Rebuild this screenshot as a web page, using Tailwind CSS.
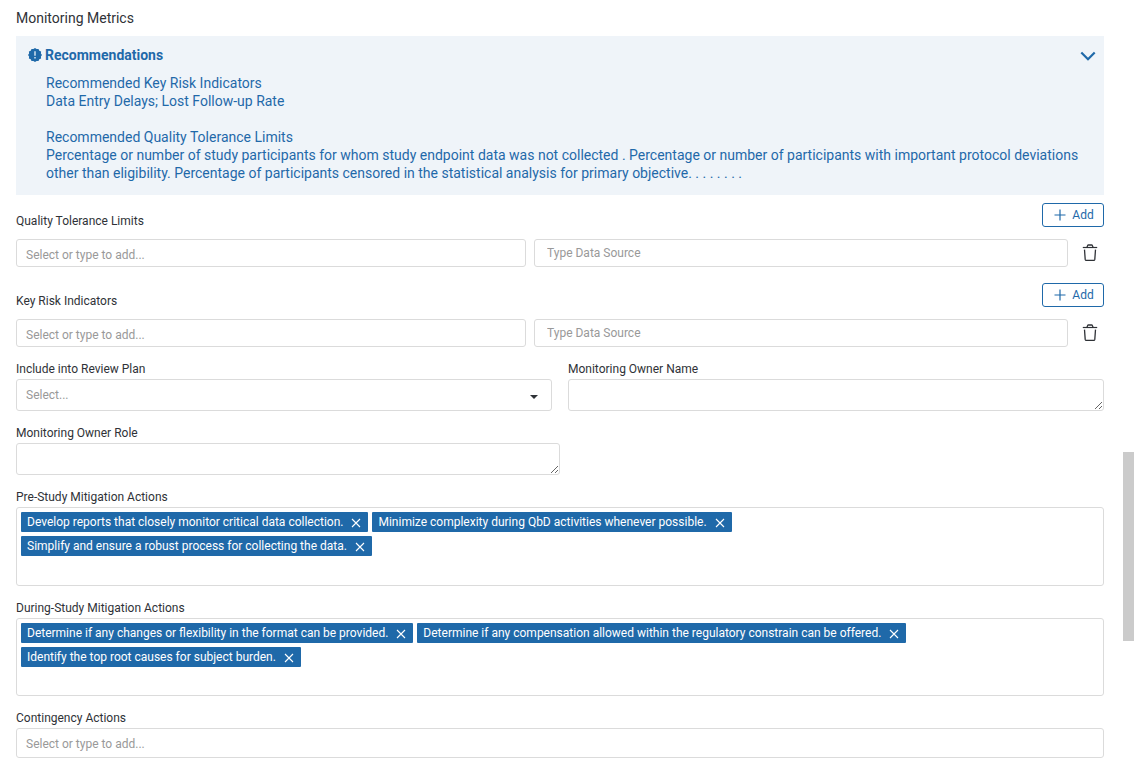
<!DOCTYPE html>
<html lang="en">
<head>
<meta charset="utf-8">
<meta name="viewport" content="width=device-width, initial-scale=1">
<title>Monitoring Metrics</title>
<script src="https://cdn.jsdelivr.net/npm/@tailwindcss/browser@4"></script>
</head>
<body class="relative min-h-screen overflow-hidden bg-white font-['Roboto',sans-serif] text-xs text-[#2f3237]">
<svg class="hidden">
  <symbol id="plus" viewBox="0 0 12 12"><path d="M6 .5v11M.5 6h11" fill="none" stroke="currentColor" stroke-width="1.2"/></symbol>
  <symbol id="cross" viewBox="0 0 10 10"><path d="M1 1l8 8M9 1l-8 8" fill="none" stroke="currentColor" stroke-width="1.1"/></symbol>
  <symbol id="trash" viewBox="0 0 16 18"><path d="M.8 3.500h14.400" fill="none" stroke="currentColor" stroke-width="1.2"/><path d="M5 3.300L5.600 1.600Q5.800 1 6.400 1H9.600Q10.200 1 10.400 1.600L11 3.300M2.500 5.600L3.200 15.400Q3.300 16.400 4.300 16.400H11.700Q12.700 16.400 12.800 15.400L13.500 5.600" fill="none" stroke="currentColor" stroke-width="1.3"/></symbol>
</svg>
<main class="pl-4 pr-[33px] pt-2 pb-1">
  <h1 class="h-7 text-sm leading-5">Monitoring Metrics</h1>

  <section class="bg-[#eff4f9] pt-2 pb-[13px] text-[#1f69a9]">
    <div class="flex h-[30px] items-start justify-between pl-3 pr-2">
      <h2 class="flex items-center gap-[3px] text-sm leading-[22px] font-bold">
        <svg class="size-3.5" viewBox="0 0 14 14" aria-hidden="true"><path fill="currentColor" d="M7 0l1.600 1.100L10.500.9l.8 1.800 1.800.800-.200 1.900L14 7l-1.100 1.600.2 1.900-1.800.800-.800 1.800-1.900-.200L7 14l-1.600-1.100-1.900.2-.800-1.800-1.800-.800.2-1.900L0 7l1.100-1.600L.9 3.500l1.800-.800L3.500.9l1.900.2z"/><path d="M7 3.300v4.400M7 9v1.600" stroke="#dce9f4" stroke-width="1.400"/></svg>
        Recommendations
      </h2>
      <button type="button" aria-label="Collapse recommendations" class="flex h-6 w-4 items-center justify-center"><svg class="h-3 w-4" viewBox="0 0 16 12"><path d="M1.300 2.500L8 9.200l6.700-6.700" fill="none" stroke="currentColor" stroke-width="2.200"/></svg></button>
    </div>
    <div class="pl-[30px] pr-5 text-sm leading-[18px]">
      <h3>Recommended Key Risk Indicators</h3>
      <p class="mb-[18px]">Data Entry Delays; Lost Follow-up Rate</p>
      <h3>Recommended Quality Tolerance Limits</h3>
      <p>Percentage or number of study participants for whom study endpoint data was not collected . Percentage or number of participants with important protocol deviations other than eligibility. Percentage of participants censored in the statistical analysis for primary objective. . . . . . . .</p>
    </div>
  </section>

  <section class="mt-2">
    <div class="flex items-start justify-between">
      <label for="qtl" class="mt-2 leading-5">Quality Tolerance Limits</label>
      <button type="button" class="flex h-6 w-[62px] items-center justify-center gap-1.5 rounded-[3px] border border-[#1f69a9] pl-0.5 text-[#1f69a9]"><svg class="size-3" aria-hidden="true"><use href="#plus"/></svg>Add</button>
    </div>
    <div class="mt-2 grid grid-cols-[510fr_534fr_28px] items-center gap-x-2">
      <input id="qtl" type="text" placeholder="Select or type to add..." class="h-7 w-full rounded-[3px] border border-[#dbdbdb] px-[9px] pt-1 placeholder:text-[#999]">
      <input type="text" aria-label="Quality tolerance limit data source" placeholder="Type Data Source" class="h-7 w-full rounded-[3px] border border-[#dbdbdb] px-3 placeholder:text-[#999]">
      <button type="button" aria-label="Delete quality tolerance limit" class="flex justify-center"><svg class="h-[18px] w-4"><use href="#trash"/></svg></button>
    </div>
  </section>

  <section class="mt-4">
    <div class="flex items-start justify-between">
      <label for="kri" class="mt-2 leading-5">Key Risk Indicators</label>
      <button type="button" class="flex h-6 w-[62px] items-center justify-center gap-1.5 rounded-[3px] border border-[#1f69a9] pl-0.5 text-[#1f69a9]"><svg class="size-3" aria-hidden="true"><use href="#plus"/></svg>Add</button>
    </div>
    <div class="mt-2 grid grid-cols-[510fr_534fr_28px] items-center gap-x-2">
      <input id="kri" type="text" placeholder="Select or type to add..." class="h-7 w-full rounded-[3px] border border-[#dbdbdb] px-[9px] pt-1 placeholder:text-[#999]">
      <input type="text" aria-label="Key risk indicator data source" placeholder="Type Data Source" class="h-7 w-full rounded-[3px] border border-[#dbdbdb] px-3 placeholder:text-[#999]">
      <button type="button" aria-label="Delete key risk indicator" class="flex justify-center"><svg class="h-[18px] w-4"><use href="#trash"/></svg></button>
    </div>
  </section>

  <div class="mt-3 grid grid-cols-2 gap-4">
    <div>
      <label for="plan" class="block leading-5">Include into Review Plan</label>
      <div class="relative">
        <select id="plan" class="block h-8 w-full appearance-none rounded-[3px] border border-[#dbdbdb] bg-white px-[9px] text-[#999]"><option>Select...</option></select>
        <svg class="pointer-events-none absolute top-4 right-3.5 h-1 w-2" viewBox="0 0 8 4" aria-hidden="true"><path d="M0 0h8L4 4z" fill="#2f3237"/></svg>
      </div>
    </div>
    <div>
      <label for="owner" class="block leading-5">Monitoring Owner Name</label>
      <textarea id="owner" class="block h-8 w-full overflow-hidden rounded-[3px] border border-[#dbdbdb] px-2 py-1"></textarea>
    </div>
  </div>

  <div class="mt-3 w-1/2">
    <label for="role" class="block leading-5">Monitoring Owner Role</label>
    <textarea id="role" class="block h-8 w-full overflow-hidden rounded-[3px] border border-[#dbdbdb] px-2 py-1"></textarea>
  </div>

  <section class="mt-3" aria-labelledby="pre">
    <h2 id="pre" class="leading-5">Pre-Study Mitigation Actions</h2>
    <ul class="flex min-h-[79px] flex-wrap content-start gap-1 rounded-[3px] border border-[#dbdbdb] py-1 pl-1 pr-10 text-white">
      <li class="flex h-5 items-center rounded-[1px] bg-[#1f69a9] pl-1.5 pr-[7px]">Develop reports that closely monitor critical data collection.<button type="button" aria-label="Remove" class="ml-2 pt-0.5"><svg class="size-2.5"><use href="#cross"/></svg></button></li>
      <li class="flex h-5 items-center rounded-[1px] bg-[#1f69a9] pl-1.5 pr-[7px]">Minimize complexity during QbD activities whenever possible.<button type="button" aria-label="Remove" class="ml-2 pt-0.5"><svg class="size-2.5"><use href="#cross"/></svg></button></li>
      <li class="flex h-5 items-center rounded-[1px] bg-[#1f69a9] pl-1.5 pr-[7px]">Simplify and ensure a robust process for collecting the data.<button type="button" aria-label="Remove" class="ml-2 pt-0.5"><svg class="size-2.5"><use href="#cross"/></svg></button></li>
    </ul>
  </section>

  <section class="mt-3" aria-labelledby="during">
    <h2 id="during" class="leading-5">During-Study Mitigation Actions</h2>
    <ul class="flex min-h-[78px] flex-wrap content-start gap-1 rounded-[3px] border border-[#dbdbdb] py-1 pl-1 pr-10 text-white">
      <li class="flex h-5 items-center rounded-[1px] bg-[#1f69a9] pl-1.5 pr-[7px]">Determine if any changes or flexibility in the format can be provided.<button type="button" aria-label="Remove" class="ml-2 pt-0.5"><svg class="size-2.5"><use href="#cross"/></svg></button></li>
      <li class="flex h-5 items-center rounded-[1px] bg-[#1f69a9] pl-1.5 pr-[7px]">Determine if any compensation allowed within the regulatory constrain can be offered.<button type="button" aria-label="Remove" class="ml-2 pt-0.5"><svg class="size-2.5"><use href="#cross"/></svg></button></li>
      <li class="flex h-5 items-center rounded-[1px] bg-[#1f69a9] pl-1.5 pr-[7px]">Identify the top root causes for subject burden.<button type="button" aria-label="Remove" class="ml-2 pt-0.5"><svg class="size-2.5"><use href="#cross"/></svg></button></li>
    </ul>
  </section>

  <div class="mt-3">
    <label for="contingency" class="block leading-5">Contingency Actions</label>
    <input id="contingency" type="text" placeholder="Select or type to add..." class="block h-[30px] w-full rounded-[3px] border border-[#dbdbdb] px-[9px] pt-0.5 placeholder:text-[#999]">
  </div>
</main>
<div class="absolute top-[452px] right-[3px] h-[189px] w-[11px] bg-[#cbcbcb]" aria-hidden="true"></div>
</body>
</html>
